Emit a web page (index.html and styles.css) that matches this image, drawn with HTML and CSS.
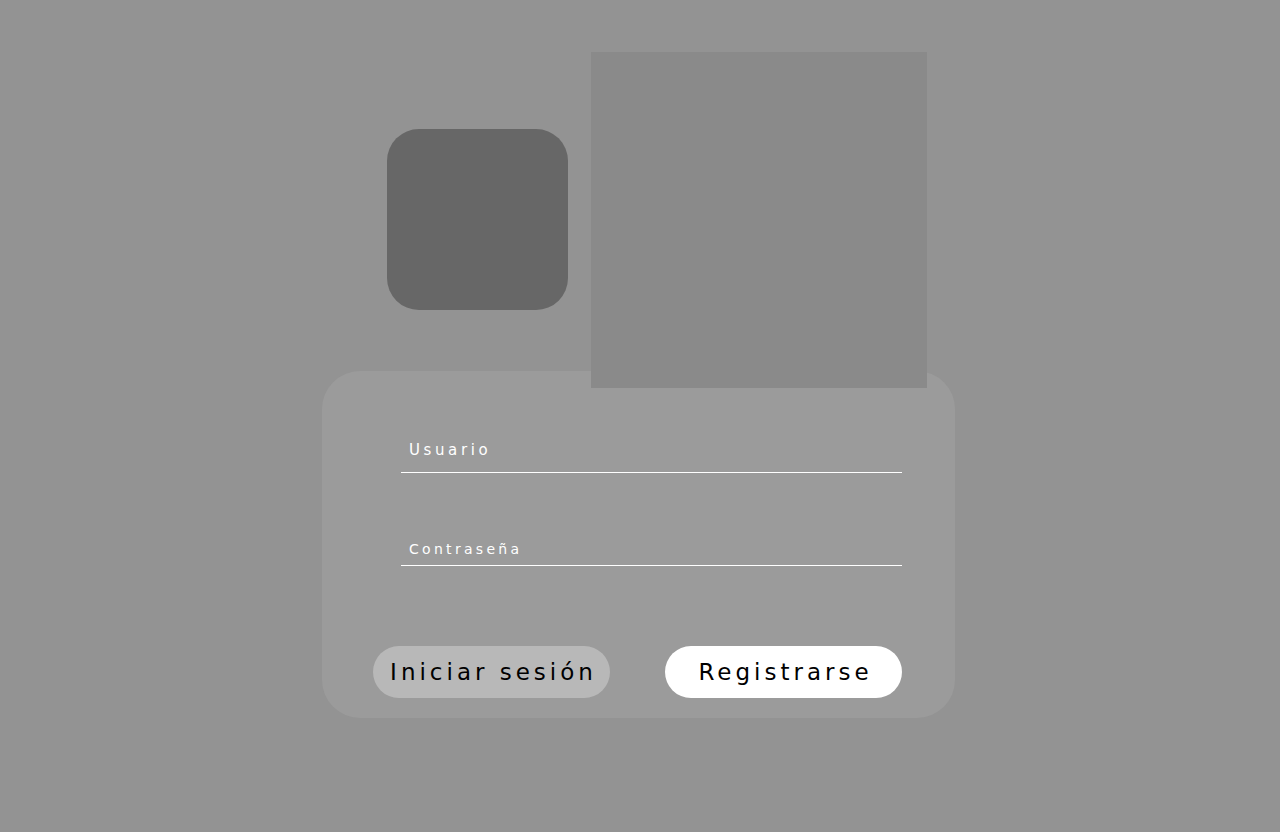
FILE: index.html
```html
<!DOCTYPE html>
<html lang="es">
<head>
<meta charset="utf-8">
<title>Login</title>
<link rel="stylesheet" href="styles.css">
</head>
<body>
<main class="wrap">
  <div class="top">
    <div class="logo"></div>
    <div class="picture"></div>
  </div>
  <form class="card">
    <input class="field field-user" type="text" placeholder="Usuario">
    <input class="field field-pass" type="password" placeholder="Contraseña">
    <div class="actions">
      <button type="button" class="btn btn-login">Iniciar sesión</button>
      <button type="button" class="btn btn-register">Registrarse</button>
    </div>
  </form>
</main>
</body>
</html>
```
FILE: styles.css
```css
html, body {
  margin: 0;
  padding: 0;
  background: #939393;
  font-family: "DejaVu Sans", "Liberation Sans", sans-serif;
}
.wrap {
  width: 633px;
  margin-left: 322px;
  padding-top: 52px;
}
.top {
  display: flex;
  align-items: center;
  gap: 23px;
  padding-left: 65px;
  position: relative;
  z-index: 1;
}
.logo {
  width: 181px;
  height: 181px;
  margin-bottom: 1px;
  border-radius: 32px;
  background: #676767;
}
.picture {
  width: 336px;
  height: 336px;
  background: #8a8a8a;
}
.card {
  margin-top: -17px;
  height: 347px;
  box-sizing: border-box;
  background: #9b9b9b;
  border-radius: 38px;
  padding: 59px 53px 20px 51px;
  display: flex;
  flex-direction: column;
}
.field {
  display: block;
  margin-left: 28px;
  width: 501px;
  box-sizing: border-box;
  background: transparent;
  border: 0;
  border-bottom: 1px solid #ffffff;
  outline: none;
  color: #ffffff;
  font-family: inherit;
  font-size: 15px;
  letter-spacing: 3.6px;
  padding: 0 8px;
}
.field::placeholder {
  color: #ffffff;
  opacity: 1;
}
.field-user {
  height: 43px;
  padding-top: 0;
  padding-bottom: 2px;
}
.field-pass {
  margin-top: 60px;
  height: 33px;
  padding-top: 0;
  padding-bottom: 0;
  font-size: 14px;
  letter-spacing: 3.3px;
}
.actions {
  margin-top: 80px;
  display: flex;
  justify-content: space-between;
}
.btn {
  width: 237px;
  height: 52px;
  border: 0;
  border-radius: 26px;
  font-family: inherit;
  font-size: 23px;
  letter-spacing: 4px;
  color: #000000;
  padding: 0 0 0 4px;
  cursor: pointer;
}
.btn-login {
  background: #b8b8b8;
}
.btn-register {
  background: #ffffff;
}
```
